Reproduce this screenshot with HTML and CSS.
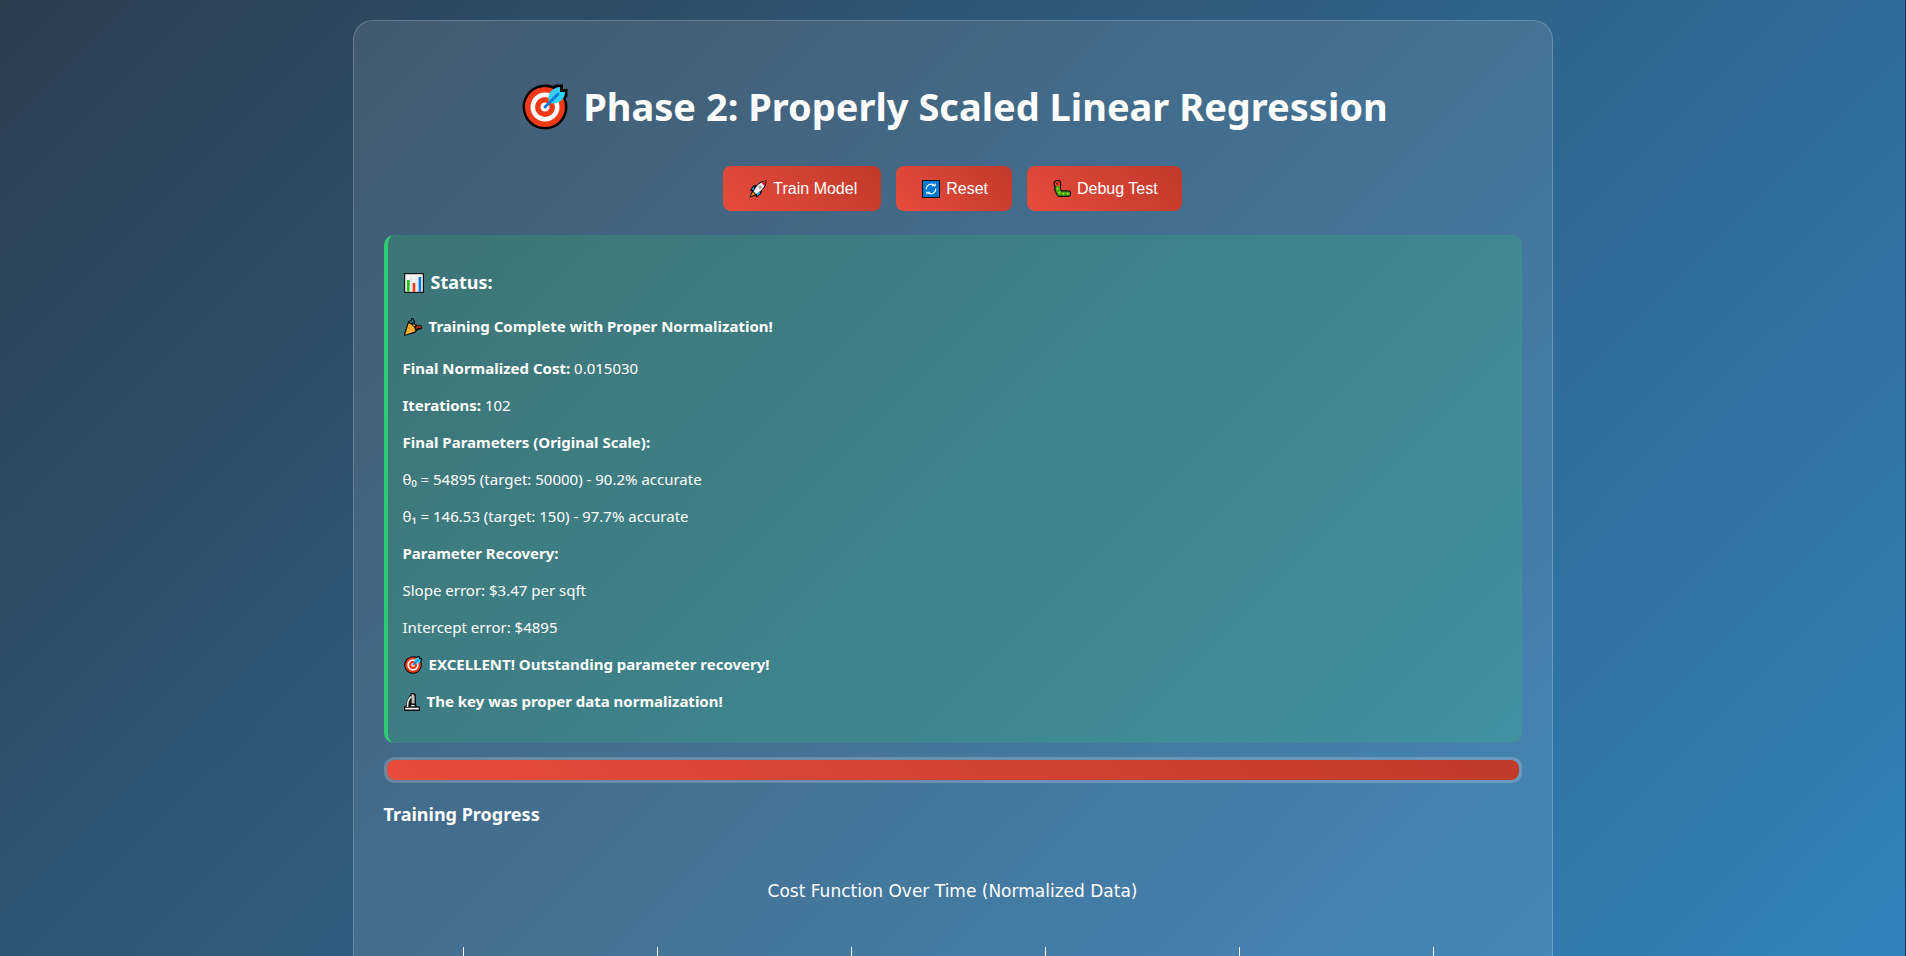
FILE: index.html
```
<!DOCTYPE html>
<html lang="en">
<head>
<meta charset="utf-8">
<title>Phase 2: Properly Scaled Linear Regression</title>
<link rel="stylesheet" href="styles.css">
</head>
<body>
<svg class="sprite" aria-hidden="true">
  <symbol id="target" viewBox="0 0 46 46">
    <path d="M23 .5C27 .5 29 1 31 2L34 .5H41V5H45.5V12L43.5 15C45 18 45.5 20 45.5 23A22.5 22.5 0 1 1 23 .5Z" fill="#000"/>
    <circle cx="23" cy="23" r="20" fill="#f03a17"/>
    <circle cx="23" cy="23" r="14.5" fill="#fff"/>
    <circle cx="23" cy="23" r="10" fill="#f03a17"/>
    <circle cx="23" cy="23" r="4.5" fill="#fff"/>
    <path d="M27 19C25 10 29 4 38 3V8H43C43 16 36 21 27 19Z" fill="#31d2f7"/>
    <path d="M23 23 36 10" stroke="#0078d7" stroke-width="2.8" stroke-linecap="round"/>
  </symbol>
  <symbol id="rocket" viewBox="0 0 18 18">
    <path d="M17.5.5C13 .5 10 2 8 5L4 5.5.8 10.5 3 11 .5 17.5 7 15.5V17.5L12 14 13 10C16 8 17.5 5 17.5.5Z" fill="#000"/>
    <path d="M5 6.3 2.5 9.5 5 10ZM8 13.2V16L11 13.4 11.6 11Z" fill="#0aa5e8"/>
    <path d="M16.5 1.5C11 2 8 5 4.5 11.5L7 14C13 10.5 16 7 16.5 1.5Z" fill="#f2f2f2"/>
    <path d="M16.5 1.5C14.5 1.6 13.3 2 12 2.6L15.4 6C16.1 4.7 16.4 3.3 16.5 1.5Z" fill="#e81224"/>
    <circle cx="11" cy="7" r="1.8" fill="#a8a8a8"/>
    <path d="M4 12 1.6 16.4 6 14.2Z" fill="#ff9b18"/>
  </symbol>
  <symbol id="reset" viewBox="0 0 18 18">
    <path d="M0 0H18V18H0Z" fill="#111"/>
    <path d="M1 1H17V17H1Z" fill="#0078d7"/>
    <path d="M4.3 9.5A4.8 4.8 0 0 1 12.2 5.4M13.7 8.5A4.8 4.8 0 0 1 5.8 12.6M10 5.6H13.2V3.6M8 12.4H4.8V14.4" fill="none" stroke="#fff" stroke-width="1.1"/>
  </symbol>
  <symbol id="bug" viewBox="0 0 18 18">
    <circle cx="4.4" cy="3.8" r="3.9" fill="#111"/>
    <path d="M4.6 5V9.5L6.6 13.6H15" fill="none" stroke="#111" stroke-width="6.6" stroke-linecap="round" stroke-linejoin="round"/>
    <path d="M4.8 5V9.5L6.6 13.6H15" fill="none" stroke="#4fa818" stroke-width="4.4" stroke-linecap="round" stroke-linejoin="round"/>
    <circle cx="4.4" cy="3.8" r="2.7" fill="#e8391d"/>
    <circle cx="4" cy="3.6" r=".9" fill="#222"/>
    <path d="M8.4 11V12.4M12.6 11V12.4M8.6 15V16.4M12.6 15V16.4" stroke="#163c08" stroke-width=".8"/>
    <g fill="#b5e61d"><circle cx="4.6" cy="8.6" r=".9"/><circle cx="6.4" cy="12.6" r=".9"/><circle cx="10.5" cy="13.6" r=".9"/><circle cx="14.8" cy="13.6" r=".9"/></g>
  </symbol>
  <symbol id="chart" viewBox="0 0 20 20">
    <path d="M0 0H20V20H0Z" fill="#111"/>
    <path d="M1.2 1.2H18.8V18.8H1.2Z" fill="#f4f4f4"/>
    <path d="M1 6H19M1 12H19M7 1V19M13 1V19" stroke="#ddd" stroke-width=".7"/>
    <path d="M3 7H5.6V18.8H3Z" fill="#16c60c"/>
    <path d="M8.7 10H11.3V18.8H8.7Z" fill="#f03a17"/>
    <path d="M14.6 4H17.2V18.8H14.6Z" fill="#0078d7"/>
  </symbol>
  <symbol id="party" viewBox="0 0 18 18">
    <path d="M4 3 7 2V0H9L11 3V6L14 7 18 7.5V11L14 12 11 15 0 18V16L3.5 5.5Z" fill="#111"/>
    <path d="M4.6 5.5C8 6 11 9.5 11.3 13.2L1.2 16.7Z" fill="#ffb02e"/>
    <path d="M6 3.5 8 4.5M8.3 1.5 9 5" stroke="#087c9c" stroke-width="1.4"/>
    <path d="M12 10.5 14 8.5 16.8 9.5" fill="none" stroke="#c9321c" stroke-width="1.6"/>
    <path d="M9.3 6.8 10.8 7.6" stroke="#ffe34d" stroke-width="1.2"/>
    <circle cx="5" cy="10" r=".8" fill="#f77b1c"/>
  </symbol>
  <symbol id="scope" viewBox="0 0 16 18">
    <path d="M7 0H10L12 2V11.5L13 13.5H16V18H0V13H2C2 9 3 6 5 4Z" fill="#111"/>
    <path d="M7.5 3.5C4.5 5.5 3.3 9 3.5 14" fill="none" stroke="#e3e3e3" stroke-width="1.7"/>
    <path d="M7.6 1.2H9.4L10.6 3V10.5H7.6Z" fill="#bdbdbd"/>
    <path d="M1.2 14.8H14.8V16.6H1.2ZM7 12H10.6V13.2H7Z" fill="#f2f2f2"/>
  </symbol>
</svg>
<main class="card">
  <h1 class="title"><svg class="icon-title" aria-hidden="true"><use href="#target"/></svg>Phase 2: Properly Scaled Linear Regression</h1>
  <div class="actions">
    <button class="btn" type="button"><svg class="icon" aria-hidden="true"><use href="#rocket"/></svg>Train Model</button>
    <button class="btn" type="button"><svg class="icon" aria-hidden="true"><use href="#reset"/></svg>Reset</button>
    <button class="btn" type="button"><svg class="icon" aria-hidden="true"><use href="#bug"/></svg>Debug Test</button>
  </div>
  <section class="status">
    <h3 class="heading with-icon"><svg class="icon-heading" aria-hidden="true"><use href="#chart"/></svg>Status:</h3>
    <h4 class="result with-icon"><svg class="icon" aria-hidden="true"><use href="#party"/></svg>Training Complete with Proper Normalization!</h4>
    <p class="line"><strong>Final Normalized Cost:</strong> 0.015030</p>
    <p class="line"><strong>Iterations:</strong> 102</p>
    <p class="line"><strong>Final Parameters (Original Scale):</strong></p>
    <p class="line">θ₀ = 54895 (target: 50000) - 90.2% accurate</p>
    <p class="line">θ₁ = 146.53 (target: 150) - 97.7% accurate</p>
    <p class="line"><strong>Parameter Recovery:</strong></p>
    <p class="line">Slope error: $3.47 per sqft</p>
    <p class="line">Intercept error: $4895</p>
    <p class="line with-icon"><svg class="icon" aria-hidden="true"><use href="#target"/></svg><strong>EXCELLENT! Outstanding parameter recovery!</strong></p>
    <p class="line with-icon"><svg class="icon icon-narrow" aria-hidden="true"><use href="#scope"/></svg><strong>The key was proper data normalization!</strong></p>
  </section>
  <div class="progress" role="progressbar" aria-label="Training progress" aria-valuenow="100" aria-valuemin="0" aria-valuemax="100"><div class="progress-fill" style="width: 100%"></div></div>
  <h3 class="heading">Training Progress</h3>
  <figure class="plot">
    <figcaption class="plot-title">Cost Function Over Time (Normalized Data)</figcaption>
    <div class="grid-lines"><i></i><i></i><i></i><i></i><i></i><i></i></div>
  </figure>
</main>
</body>
</html>
```
FILE: styles.css
```
* { box-sizing: border-box; }
body {
  margin: 0;
  height: 100vh;
  overflow: hidden;
  padding: 20px;
  background: linear-gradient(135deg, #2c3e50, #3183bc);
  border-right: 1px solid #0c3556;
  color: #fff;
  font: 15px/21px "Noto Sans", "Open Sans", sans-serif;
}
.sprite { display: none; }
.card {
  max-width: 1200px;
  margin: 0 auto;
  padding: 30px;
  background: rgba(255, 255, 255, 0.1);
  border: 1px solid rgba(255, 255, 255, 0.2);
  border-radius: 20px;
}
.title {
  display: flex;
  align-items: center;
  justify-content: center;
  gap: 15px;
  margin: 29px 0 33px;
  padding-left: 5px;
  font-size: 38px;
  line-height: 53px;
}
.icon-title { width: 46px; height: 46px; }
.actions { display: flex; justify-content: center; gap: 15px; margin-bottom: 24px; }
.btn {
  display: flex;
  align-items: center;
  gap: 6px;
  padding: 12px 24px 12px 26px;
  border: 0;
  border-radius: 8px;
  background: linear-gradient(45deg, #e74c3c, #c0392b);
  color: #fff;
  font: 16px/21px "Liberation Sans", Arial, sans-serif;
}
.icon { width: 18px; height: 18px; }
.icon-narrow { width: 16px; }
.icon-heading { width: 20px; height: 20px; }
.with-icon { display: flex; align-items: center; gap: 7px; padding-left: 1px; }
.status {
  padding: 16px 15px 15px;
  border-left: 4px solid #2ecc71;
  border-radius: 10px;
  background: rgba(46, 204, 113, 0.2);
}
.heading { margin: 19px 0; font-size: 18px; line-height: 25px; }
.result { margin: 21px 0; font-size: 15px; }
.line { margin: 16px 0; }
.progress {
  margin-top: 14px;
  padding: 3px;
  border-radius: 10px;
  background: rgba(255, 255, 255, 0.2);
}
.progress-fill { height: 20px; border-radius: 8px; background: linear-gradient(45deg, #e74c3c, #c0392b); }
.plot { margin: 0; padding-top: 35px; }
.plot-title { text-align: center; font: 17px/20px "DejaVu Sans", Verdana, sans-serif; margin-bottom: 46px; }
.grid-lines { display: flex; justify-content: space-between; height: 240px; padding: 0 88px 0 79px; }
.grid-lines i { width: 1px; background: #fff; }
```
